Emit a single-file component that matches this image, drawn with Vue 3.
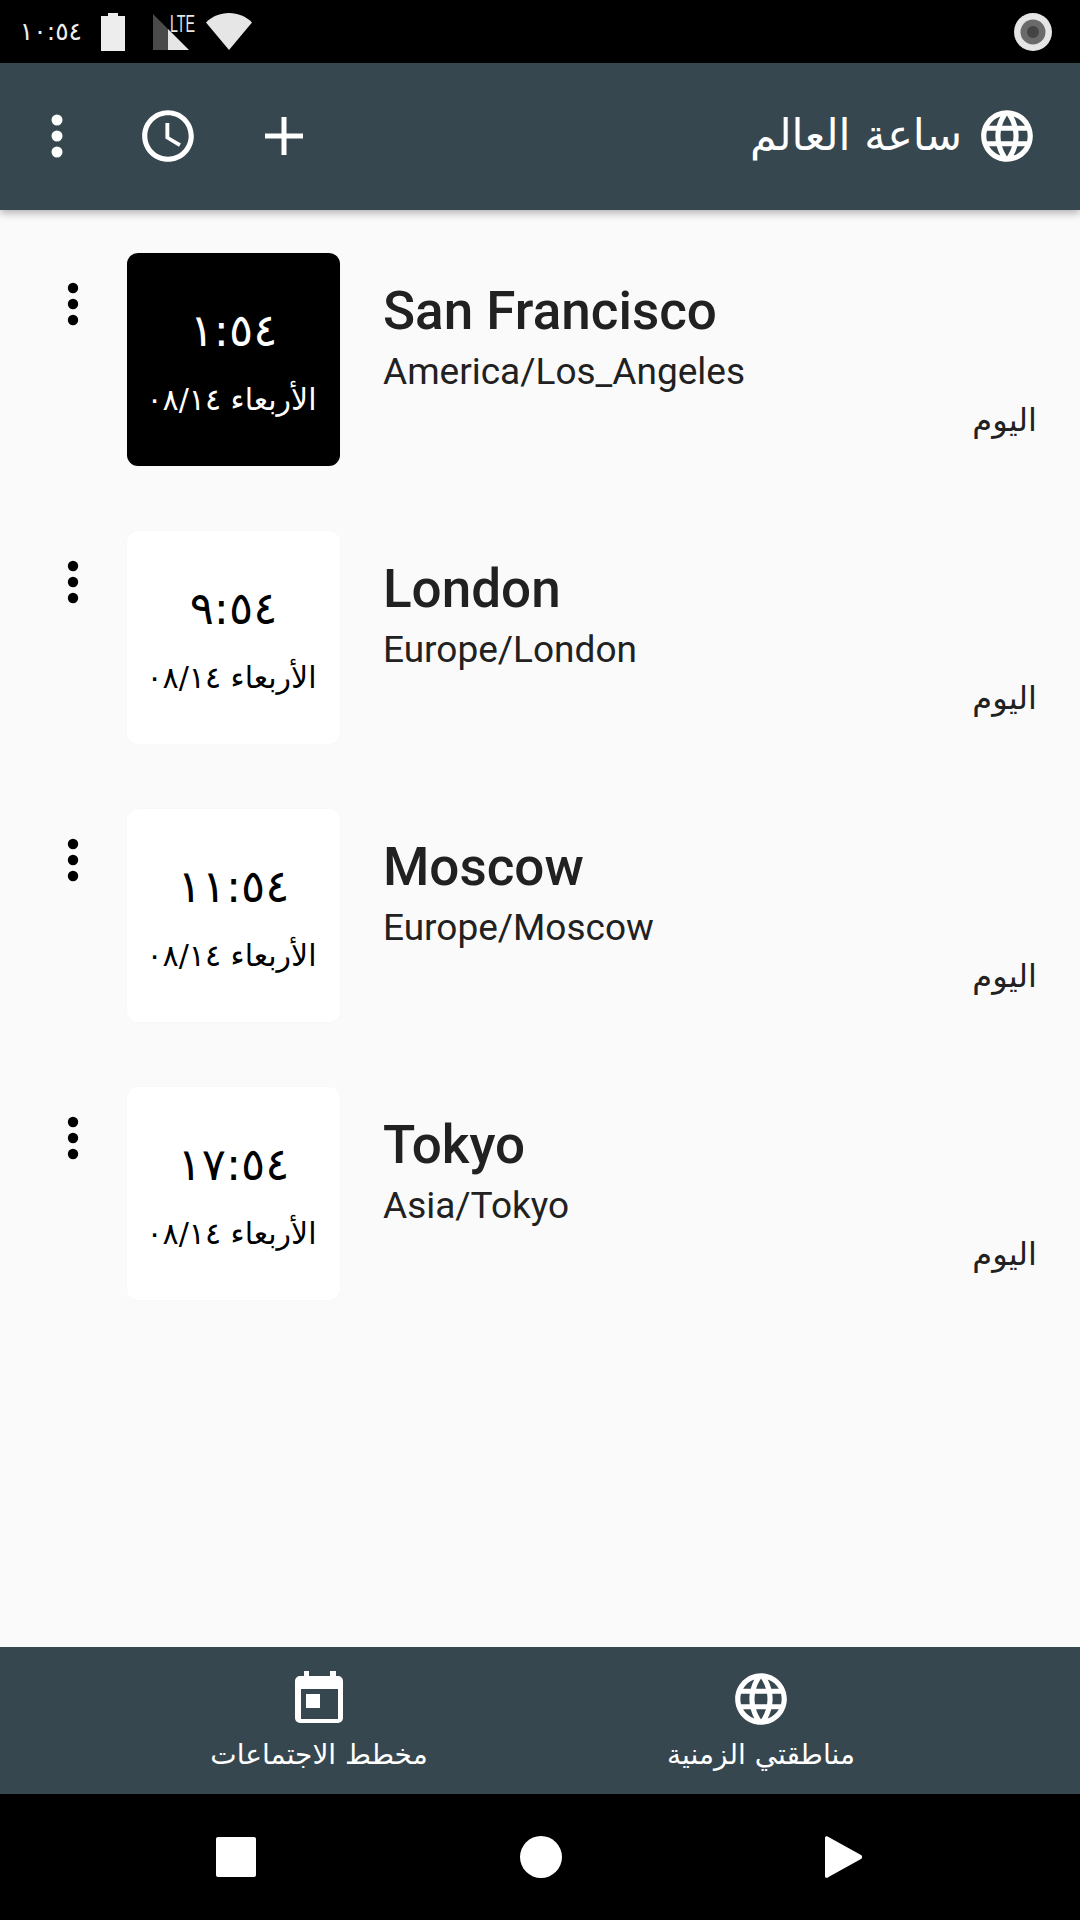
<template>
  <div class="app">
    <div class="status-bar">
      <span class="status-time" dir="rtl">١٠:٥٤</span>
      <svg class="st-battery" width="24" height="38" viewBox="0 0 24 38">
        <path d="M7 0h10v3h7v35H0V3h7z" fill="#ededed" />
      </svg>
      <div class="st-signal">
        <svg width="37" height="36" viewBox="0 0 37 36">
          <path d="M0 0l15 15v21H0z" fill="#4a4a4a" />
          <path d="M15 15l21 21H15z" fill="#e6e6e6" />
        </svg>
        <span class="st-lte">LTE</span>
      </div>
      <svg class="st-wifi" width="46" height="37" viewBox="0 0 46 37">
        <path d="M0 9.5C6 3.5 14 0 23 0s17 3.500 23 9.500L23 37z" fill="#e6e6e6" />
      </svg>
      <svg class="st-record" width="38" height="38" viewBox="0 0 38 38">
        <circle cx="19" cy="19" r="19" fill="#e5e5e5" />
        <circle cx="19" cy="19" r="12.500" fill="#6a6a6a" />
        <circle cx="19" cy="19" r="6" fill="#444" />
      </svg>
    </div>

    <header class="app-bar">
      <svg class="bar-kebab" width="20" height="62" viewBox="0 0 20 62">
        <circle cx="10" cy="15" r="5.500" /><circle cx="10" cy="31" r="5.500" /><circle cx="10" cy="47" r="5.500" />
      </svg>
      <svg class="bar-clock" width="62" height="62" viewBox="0 0 24 24">
        <path d="M11.990 2C6.470 2 2 6.480 2 12s4.470 10 9.990 10C17.520 22 22 17.520 22 12S17.520 2 11.990 2zM12 20c-4.420 0-8-3.580-8-8s3.580-8 8-8 8 3.580 8 8-3.580 8-8 8zm.5-13H11v6l5.250 3.150.75-1.230-4.500-2.670z" />
      </svg>
      <svg class="bar-plus" width="38" height="38" viewBox="0 0 38 38">
        <path d="M16.500 0h5v16.500H38v5H21.500V38h-5V21.500H0v-5h16.500z" />
      </svg>
      <div class="bar-title">
        <h1 dir="rtl">ساعة العالم</h1>
        <svg width="62" height="62" viewBox="0 0 24 24"><path :d="globe" /></svg>
      </div>
    </header>

    <main class="list">
      <div v-for="c in clocks" :key="c.city" class="row">
        <div class="row-menu">
          <svg width="14" height="46" viewBox="0 0 14 46">
            <circle cx="7" cy="6" r="5.200" /><circle cx="7" cy="22" r="5.200" /><circle cx="7" cy="38" r="5.200" />
          </svg>
        </div>
        <div class="face" :class="{ night: c.night }">
          <div class="face-time" dir="rtl">{{ c.time }}</div>
          <div class="face-date" dir="rtl">الأربعاء ٠٨/١٤</div>
        </div>
        <div class="info">
          <div class="city">{{ c.city }}</div>
          <div class="zone">{{ c.zone }}</div>
          <div class="day" dir="rtl">اليوم</div>
        </div>
      </div>
    </main>

    <nav class="bottom-nav">
      <div class="tab">
        <svg width="48" height="52" viewBox="0 0 48 52">
          <path fill-rule="evenodd" d="M9 0h5v5h21V0h6v5h2a5 5 0 0 1 5 5v37a5 5 0 0 1-5 5H5a5 5 0 0 1-5-5V10a5 5 0 0 1 5-5h4zM6 18v30h37V18zm5 5h14v14H11z" />
        </svg>
        <span dir="rtl">مخطط الاجتماعات</span>
      </div>
      <div class="tab">
        <svg width="62" height="62" class="tab-globe" viewBox="0 0 24 24"><path :d="globe" /></svg>
        <span dir="rtl">مناطقتي الزمنية</span>
      </div>
    </nav>

    <div class="sys-nav">
      <svg width="40" height="40" viewBox="0 0 40 40"><rect width="40" height="40" rx="2" /></svg>
      <svg width="42" height="42" viewBox="0 0 42 42"><circle cx="21" cy="21" r="21" /></svg>
      <svg width="37" height="42" viewBox="0 0 37 42"><path d="M0 2c0-2 2-2.500 3.500-1L36 19c1.500 1 1.500 3 0 4L3.500 41C2 42.500 0 42 0 40z" /></svg>
    </div>
  </div>
</template>

<script setup>
const globe =
  "M11.990 2C6.470 2 2 6.480 2 12s4.470 10 9.990 10C17.520 22 22 17.520 22 12S17.520 2 11.990 2zm6.930 6h-2.950c-.32-1.250-.78-2.450-1.380-3.560 1.840.63 3.370 1.910 4.330 3.560zM12 4.040c.83 1.200 1.480 2.530 1.910 3.960h-3.820c.43-1.430 1.080-2.760 1.910-3.960zM4.260 14C4.100 13.360 4 12.690 4 12s.1-1.360.26-2h3.380c-.08.66-.14 1.320-.14 2 0 .68.06 1.340.14 2H4.260zm.82 2h2.950c.32 1.250.78 2.450 1.380 3.560-1.840-.63-3.370-1.900-4.330-3.560zm2.950-8H5.080c.96-1.660 2.490-2.930 4.330-3.560C8.810 5.550 8.350 6.750 8.030 8zM12 19.960c-.83-1.200-1.480-2.530-1.910-3.960h3.820c-.43 1.430-1.080 2.760-1.910 3.960zM14.340 14H9.660c-.09-.66-.16-1.320-.16-2 0-.68.07-1.350.16-2h4.680c.09.650.16 1.320.16 2 0 .68-.07 1.340-.16 2zm.25 5.560c.6-1.110 1.060-2.310 1.380-3.560h2.950c-.96 1.650-2.490 2.930-4.330 3.560zM16.360 14c.08-.66.14-1.320.14-2 0-.68-.06-1.340-.14-2h3.380c.16.64.26 1.310.26 2s-.1 1.360-.26 2h-3.380z";

const clocks = [
  { city: "San Francisco", zone: "America/Los_Angeles", time: "١:٥٤", night: true },
  { city: "London", zone: "Europe/London", time: "٩:٥٤" },
  { city: "Moscow", zone: "Europe/Moscow", time: "١١:٥٤" },
  { city: "Tokyo", zone: "Asia/Tokyo", time: "١٧:٥٤" },
];
</script>

<style>
html,
body {
  margin: 0;
  background: #fafafa;
}
</style>

<style scoped>
.app {
  width: 1080px;
  height: 1920px;
  display: flex;
  flex-direction: column;
  overflow: hidden;
  background: #fafafa;
  font-family: "DejaVu Sans", sans-serif;
}

.status-bar {
  height: 63px;
  flex: none;
  background: #000;
  display: flex;
  align-items: center;
  padding: 0 28px 0 22px;
  box-sizing: border-box;
}

.status-time {
  width: 60px;
  color: #eee;
  font-size: 25px;
  line-height: 1;
  text-align: center;
}

.st-battery {
  margin-left: 19px;
}

.st-signal {
  position: relative;
  width: 37px;
  height: 36px;
  margin-left: 28px;
}

.st-signal svg {
  display: block;
}

.st-lte {
  position: absolute;
  left: 17px;
  top: -1px;
  color: #e6e6e6;
  font-family: "Liberation Sans", sans-serif;
  font-size: 23px;
  line-height: 1;
  transform: scaleX(0.62);
  transform-origin: left top;
}

.st-wifi {
  margin-left: 16px;
}

.st-record {
  margin-left: auto;
}

.app-bar {
  height: 147px;
  flex: none;
  box-sizing: border-box;
  background: #37474f;
  display: flex;
  align-items: center;
  padding: 0 42px 2px 47px;
  box-shadow: 0 3px 8px rgba(0, 0, 0, 0.3);
  position: relative;
  z-index: 1;
}

.app-bar svg {
  fill: #fff;
  display: block;
}

.bar-clock {
  margin-left: 70px;
}

.bar-plus {
  margin-left: 66px;
}

.bar-title {
  margin-left: auto;
  display: flex;
  align-items: center;
  gap: 14px;
}

.bar-title h1 {
  margin: 0;
  color: #fff;
  font-size: 43px;
  font-weight: 400;
  line-height: 1;
}

.list {
  flex: 1;
  padding-top: 43px;
}

.row {
  height: 278px;
  display: flex;
  align-items: flex-start;
}

.row-menu {
  width: 127px;
  flex: none;
  padding: 29px 0 0 66px;
  box-sizing: border-box;
}

.row-menu svg {
  display: block;
}

.face {
  width: 213px;
  height: 213px;
  flex: none;
  box-sizing: border-box;
  background: #fff;
  color: #000;
  border-radius: 11px;
  box-shadow: 0 0 2px rgba(0, 0, 0, 0.03);
  display: flex;
  flex-direction: column;
  align-items: center;
  padding-top: 52px;
}

.face.night {
  background: #000;
  color: #fff;
}

.face-time {
  font-size: 45px;
  line-height: 52px;
}

.face-date {
  margin: 25px 4px 0 0;
  font-size: 30px;
  line-height: 36px;
}

.info {
  flex: 1;
  margin-left: 43px;
  padding: 28px 43px 0 0;
  color: #212121;
  font-family: Roboto, sans-serif;
}

.city {
  font-size: 53px;
  font-weight: 500;
  line-height: 60px;
}

.zone {
  font-size: 37px;
  line-height: 42px;
  margin-top: 10px;
}

.day {
  margin-top: 6px;
  font-family: "DejaVu Sans", sans-serif;
  font-size: 32px;
  line-height: 42px;
  text-align: right;
}

.bottom-nav {
  height: 147px;
  flex: none;
  box-sizing: border-box;
  background: #37474f;
  display: grid;
  grid-template-columns: 442px 442px;
  justify-content: center;
  padding-top: 24px;
}

.tab {
  display: flex;
  flex-direction: column;
  align-items: center;
  color: #fff;
  font-size: 28px;
  line-height: 36px;
}

.tab svg {
  fill: #fff;
  display: block;
  margin-bottom: 14px;
}

.tab-globe.tab-globe {
  margin-top: -3px;
  margin-bottom: 7px;
}

.sys-nav {
  height: 126px;
  flex: none;
  background: #000;
  display: flex;
  align-items: center;
  padding: 0 218px 0 216px;
  box-sizing: border-box;
  justify-content: space-between;
}

.sys-nav svg {
  fill: #fff;
  display: block;
}
</style>
